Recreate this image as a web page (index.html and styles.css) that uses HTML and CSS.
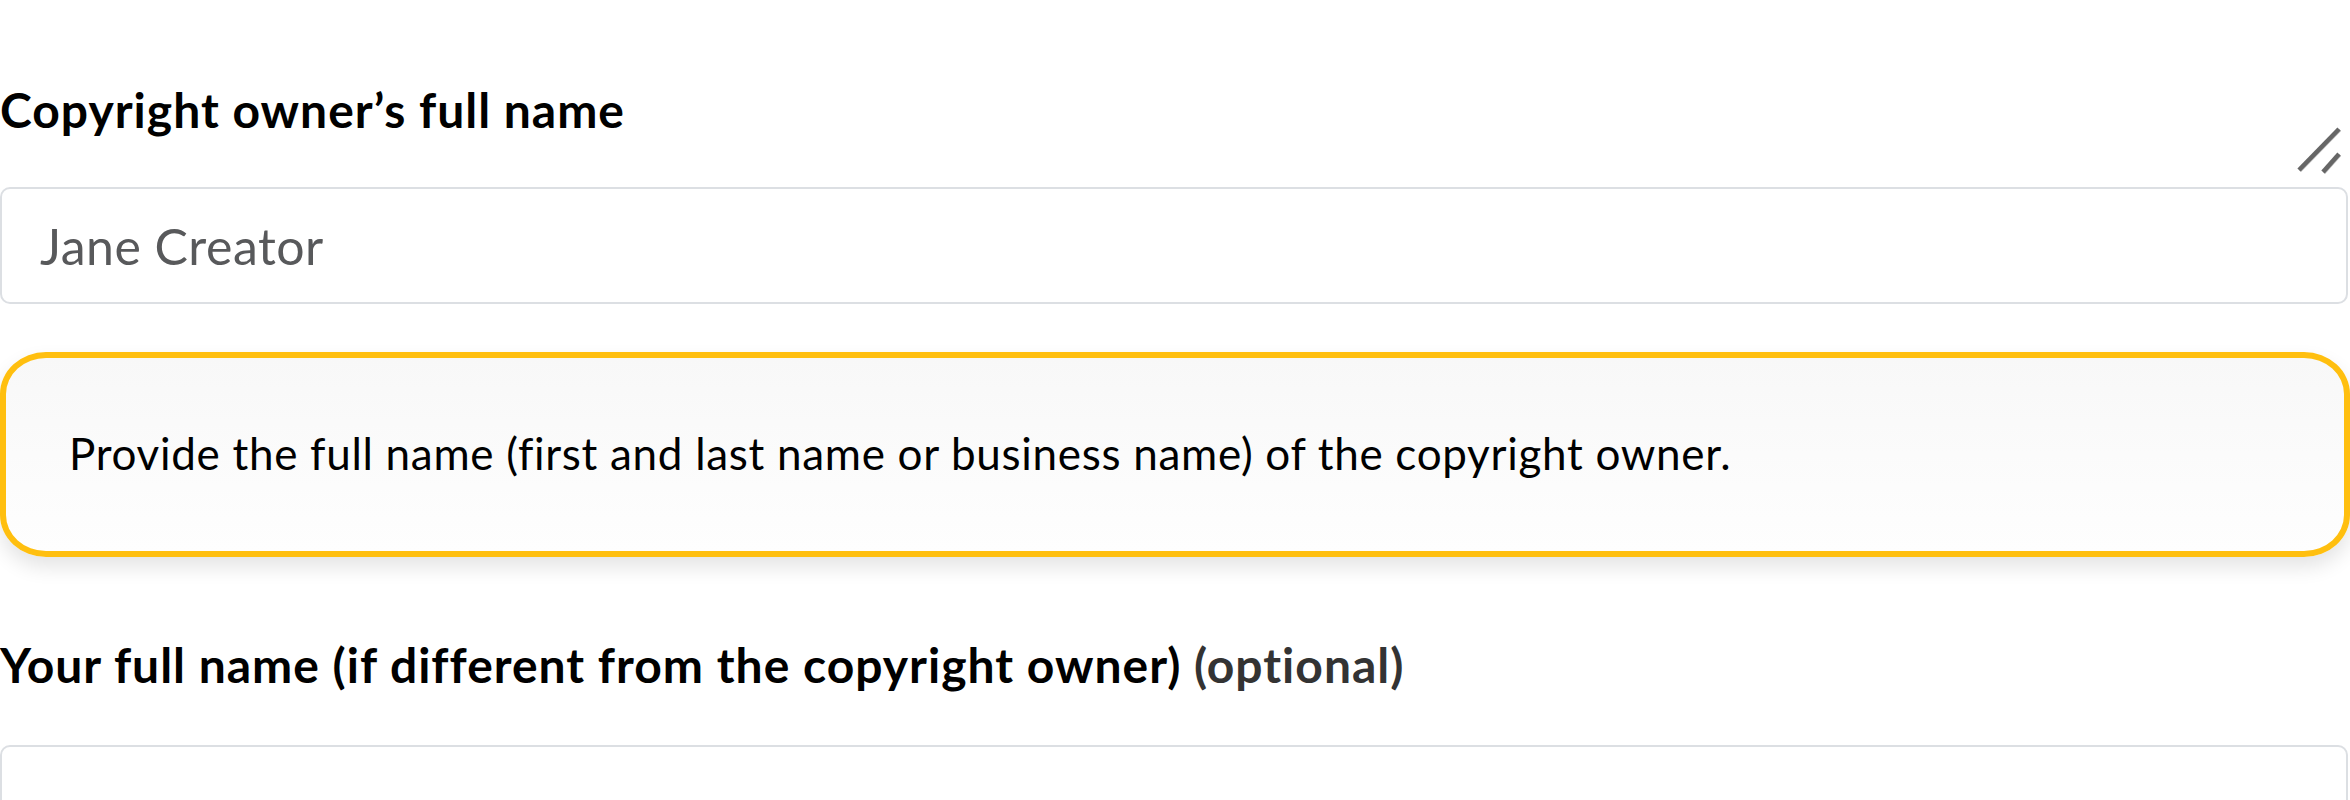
FILE: index.html
```html
<!DOCTYPE html>
<html lang="en">
<head>
<meta charset="utf-8">
<title>Copyright form</title>
<link rel="stylesheet" href="styles.css">
</head>
<body>
<form class="form">
  <div class="field">
    <div class="label-row">
      <label class="label" for="owner">Copyright owner’s full name</label>
      <svg class="grip" width="50" height="50" viewBox="0 0 50 50" aria-hidden="true">
        <line x1="7" y1="46" x2="47" y2="5" class="grip-shadow"/>
        <line x1="31" y1="48" x2="47" y2="30" class="grip-shadow"/>
        <line x1="6" y1="45" x2="46" y2="4" class="grip-line"/>
        <line x1="30" y1="47" x2="46" y2="29" class="grip-line"/>
      </svg>
    </div>
    <input class="input" id="owner" type="text" placeholder="Jane Creator">
  </div>
  <div class="callout">Provide the full name (first and last name or business name) of the copyright owner.</div>
  <div class="field field-second">
    <div class="label-row">
      <label class="label" for="yours">Your full name (if different from the copyright owner) <span class="optional">(optional)</span></label>
    </div>
    <input class="input input-second" id="yours" type="text">
  </div>
</form>
</body>
</html>
```
FILE: styles.css
```css
html, body {
  margin: 0;
  padding: 0;
  background: #ffffff;
}
body {
  font-family: Lato, "Open Sans", sans-serif;
  font-variant-ligatures: none;
  color: #000;
  overflow: hidden;
}
.form {
  padding-top: 80px;
  width: 2350px;
}
.label-row {
  display: flex;
  justify-content: space-between;
  align-items: flex-start;
}
.label {
  font-size: 48px;
  font-weight: 700;
  line-height: 60px;
  letter-spacing: 1px;
  color: #000;
}
.optional {
  color: #333;
  font-weight: 700;
}
.grip {
  margin-top: 45px;
  margin-right: 7px;
  display: block;
}
.grip-line {
  stroke: #666;
  stroke-width: 4.5;
}
.grip-shadow {
  stroke: #bbb;
  stroke-width: 3;
}
.input {
  display: block;
  box-sizing: border-box;
  width: 2348px;
  height: 117px;
  margin: 12px 0 0 0;
  border: 2px solid #dcdfe3;
  border-radius: 10px;
  padding: 0 0 0 38px;
  font-family: Lato, "Open Sans", sans-serif;
  font-size: 50px;
  letter-spacing: 0.5px;
  color: #222;
  background: #fff;
  outline: none;
}
.input::placeholder {
  color: #58595b;
}
.callout {
  margin-top: 48px;
  box-sizing: border-box;
  height: 205px;
  border: 6px solid #ffbf0f;
  border-radius: 46px / 42px;
  background: linear-gradient(#f8f8f8, #fefefe);
  box-shadow: 0 10px 20px rgba(0, 0, 0, 0.11);
  padding: 68px 60px 71px 63px;
  font-size: 44px;
  line-height: 54px;
  letter-spacing: 0.7px;
  color: #000;
}
.field-second {
  margin-top: 78px;
}
.input-second {
  margin-top: 50px;
}
```
